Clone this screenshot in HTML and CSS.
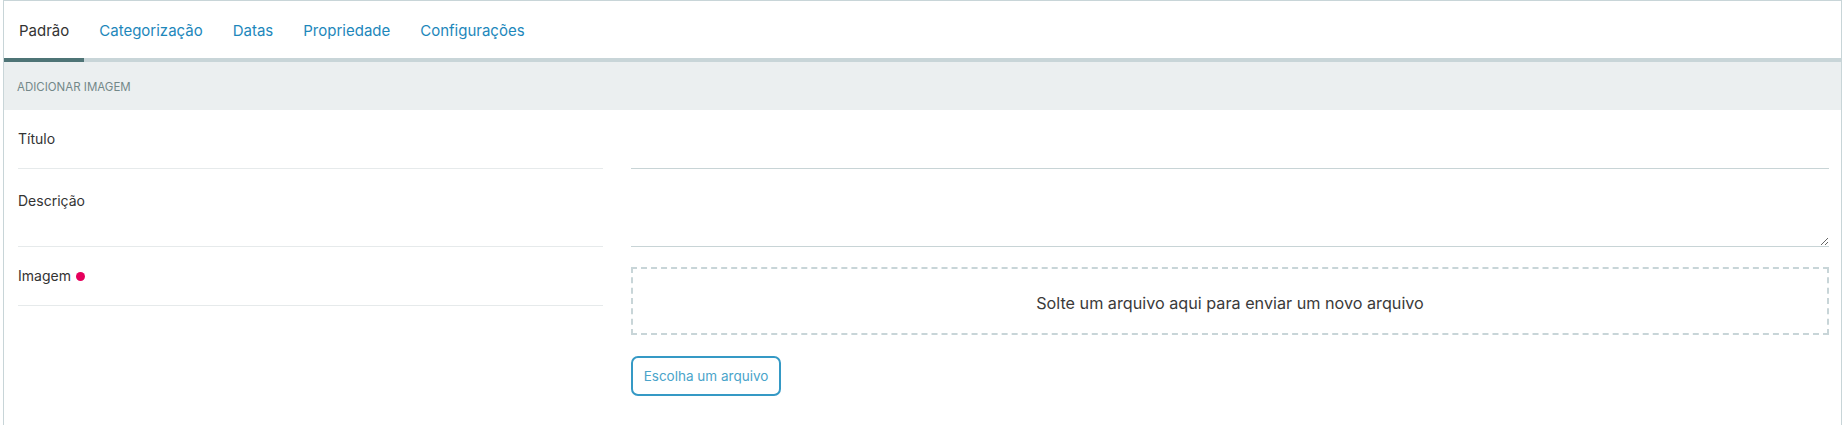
FILE: index.html
```html
<!DOCTYPE html>
<html lang="pt">
<head>
<meta charset="utf-8">
<title>Adicionar imagem</title>
<link rel="stylesheet" href="styles.css">
</head>
<body>
<div class="panel">
  <nav class="tabs">
    <a class="tab tab--active">Padrão</a>
    <a class="tab">Categorização</a>
    <a class="tab">Datas</a>
    <a class="tab">Propriedade</a>
    <a class="tab">Configurações</a>
  </nav>
  <div class="section-head">ADICIONAR IMAGEM</div>
  <form class="form">
    <div class="row">
      <label class="label-cell">Título</label>
      <div class="field"><input class="input" type="text"></div>
    </div>
    <div class="row">
      <label class="label-cell label-cell--tall">Descrição</label>
      <div class="field"><textarea class="textarea"></textarea></div>
    </div>
    <div class="row">
      <label class="label-cell label-cell--top">Imagem <span class="required"></span></label>
      <div class="field field--upload">
        <div class="dropzone">Solte um arquivo aqui para enviar um novo arquivo</div>
        <button type="button" class="btn-outline">Escolha um arquivo</button>
      </div>
    </div>
  </form>
</div>
</body>
</html>
```

FILE: styles.css
```css
* { box-sizing: border-box; }
html, body { margin: 0; padding: 0; background: #fff; }
body {
  font-family: Inter, Roboto, "Liberation Sans", sans-serif;
  color: #333;
  font-size: 14px;
}
.panel {
  margin-left: 3px;
  width: 1839px;
  min-height: 440px;
  border: 1px solid #c8d5d8;
  background: #fff;
}
.tabs {
  display: flex;
  border-bottom: 4px solid #c8d5d8;
  height: 61px;
}
.tab {
  display: block;
  padding: 20px 15px 17px;
  font-size: 15px;
  line-height: 20px;
  color: #1d87bb;
  text-decoration: none;
  cursor: pointer;
}
.tab--active {
  color: #333;
  border-bottom: 4px solid #4e7476;
  height: 61px;
}
.section-head {
  background: #ebeff0;
  height: 48px;
  padding: 17px 13px 0;
  font-size: 11.5px;
  line-height: 16px;
  color: #738889;
}
.form {
  padding: 0 12px 30px 14px;
}
.row {
  display: grid;
  grid-template-columns: 585px 1fr;
  column-gap: 28px;
}
.label-cell {
  display: block;
  padding: 19px 0;
  line-height: 20px;
  font-size: 14px;
  color: #333;
  border-bottom: 1px solid #e6eaeb;
}
.label-cell--tall { padding-top: 22px; }
.label-cell--top { align-self: start; }
.required {
  display: inline-block;
  width: 9px;
  height: 9px;
  border-radius: 50%;
  background: #e6005c;
  margin-left: 1px;
  vertical-align: 0;
}
.field { display: flex; flex-direction: column; }
.input {
  height: 59px;
  border: 0;
  border-bottom: 1px solid #c8d4d6;
  font: inherit;
  outline: none;
  padding: 0;
  width: 100%;
}
.textarea {
  height: 78px;
  border: 0;
  border-bottom: 1px solid #c8d4d6;
  font: inherit;
  outline: none;
  padding: 0;
  width: 100%;
  resize: vertical;
  display: block;
}
.field--upload { padding-top: 20px; align-items: flex-start; }
.dropzone {
  width: 100%;
  height: 68px;
  border: 2px dashed #c8d5d8;
  display: flex;
  align-items: center;
  justify-content: center;
  font-size: 16.2px;
  color: #3a3a3a;
  padding-top: 3px;
}
.btn-outline {
  margin-top: 21px;
  width: 150px;
  height: 40px;
  border: 2px solid #3599c5;
  border-radius: 7px;
  background: #fff;
  color: #4aa4ca;
  font-family: Inter, Roboto, "Liberation Sans", sans-serif;
  font-size: 13.5px;
  padding: 0;
}
```
